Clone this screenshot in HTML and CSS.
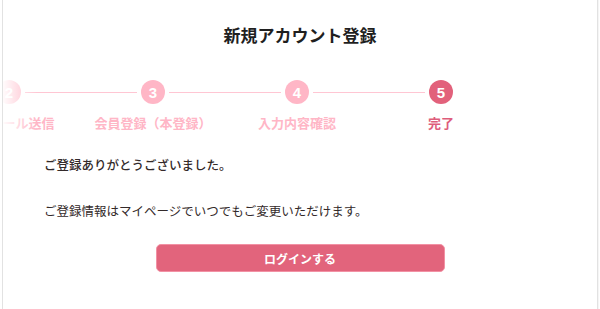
FILE: index.html
```html
<!DOCTYPE html>
<html lang="ja">
<head>
<meta charset="utf-8">
<title>新規アカウント登録</title>
<link rel="stylesheet" href="styles.css">
</head>
<body>
<main class="card">
  <h1 class="title">新規アカウント登録</h1>
  <div class="stepper">
    <ol class="track">
      <li class="step done"><span class="num">1</span><span class="label">メールアドレス入力</span></li>
      <li class="step done"><span class="num">2</span><span class="label">確認メール送信</span></li>
      <li class="step done"><span class="num">3</span><span class="label">会員登録（本登録）</span></li>
      <li class="step done"><span class="num">4</span><span class="label">入力内容確認</span></li>
      <li class="step current"><span class="num">5</span><span class="label">完了</span></li>
    </ol>
    <div class="fade"></div>
  </div>
  <section class="message">
    <p class="thanks">ご登録ありがとうございました。</p>
    <p class="note">ご登録情報はマイページでいつでもご変更いただけます。</p>
  </section>
  <div class="actions">
    <button class="login" type="button">ログインする</button>
  </div>
</main>
</body>
</html>
```
FILE: styles.css
```css
* { box-sizing: border-box; }
html, body { margin: 0; padding: 0; background: #fff; }
body {
  font-family: "Noto Sans CJK JP", "Noto Sans", sans-serif;
  color: #333;
  height: 309px;
  overflow: hidden;
}
.card {
  margin: 0 2px;
  min-height: 309px;
  border-left: 1px solid #e2e2e2;
  border-right: 1px solid #e2e2e2;
  box-shadow: 1px 0 1px rgba(0,0,0,0.04);
  padding-top: 22px;
}
.title {
  margin: 0;
  text-align: center;
  font-size: 17px;
  line-height: 26px;
  font-weight: 700;
  color: #1f1f1f;
}
.stepper {
  position: relative;
  overflow: hidden;
  margin-top: 32px;
}
.track {
  list-style: none;
  margin: 0 0 0 -210px;
  padding: 0;
  display: flex;
}
.step {
  position: relative;
  flex: 0 0 144px;
  display: flex;
  flex-direction: column;
  align-items: center;
}
.step + .step::before {
  content: "";
  position: absolute;
  top: 12px;
  right: calc(50% + 16px);
  width: 112px;
  height: 1px;
  background: #ffc6d3;
}
.num {
  width: 24px;
  height: 24px;
  border-radius: 50%;
  display: flex;
  align-items: center;
  justify-content: center;
  font-family: "Liberation Sans", Arial, sans-serif;
  font-size: 15px;
  font-weight: 700;
  color: #fff;
  background: #ffb6c6;
}
.label {
  margin-top: 10px;
  font-size: 13px;
  line-height: 18px;
  font-weight: 700;
  color: #ffb6c6;
  white-space: nowrap;
}
.current .num { background: #e2617b; }
.current .label { color: #de5d7b; }
.fade {
  position: absolute;
  left: 0;
  top: 0;
  bottom: 0;
  width: 34px;
  background: linear-gradient(to right, rgba(255,255,255,0.95), rgba(255,255,255,0));
}
.message {
  padding: 0 0 0 41px;
  margin-top: 23px;
}
.message p {
  margin: 0;
  font-size: 12.5px;
  line-height: 20px;
  color: #332a2a;
}
.thanks { font-weight: 500; }
.note { margin-top: 26px !important; }
.actions {
  display: flex;
  justify-content: center;
  margin-top: 23px;
}
.login {
  width: 289px;
  height: 28px;
  border: 1px solid #f291a4;
  border-radius: 5px;
  background: #e2647c;
  color: #fff;
  font-family: "Noto Sans CJK JP", sans-serif;
  font-size: 12px;
  font-weight: 700;
  cursor: pointer;
}
```
